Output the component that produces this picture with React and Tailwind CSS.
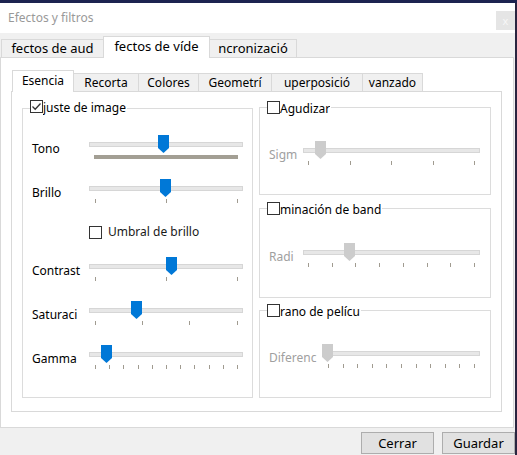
import React from "react";

// evenly spaced tick positions between a and b
const spread = (a, b, n) =>
  Array.from({ length: n }, (_, i) => a + ((b - a) * i) / (n - 1));

const Thumb = ({ disabled }) => (
  <svg width="11" height="18" viewBox="0 0 11 18" className="block">
    <path
      d="M0 0H11V13L5.5 18L0 13Z"
      fill={disabled ? "#cccccc" : "#0078d7"}
    />
  </svg>
);

const Slider = ({ className, pos, ticks = [], bar, disabled }) => (
  <div className={`relative h-[26px] shrink-0 ${className}`}>
    <div className="absolute left-0 right-0 top-[7px] h-[5px] bg-[#e7e7e7] border border-[#d6d6d6]" />
    {bar && (
      <div className="absolute left-[5px] right-[5px] top-[20px] h-[4px] bg-[#a39f94]" />
    )}
    {ticks.map((t, i) => (
      <div
        key={i}
        className="absolute top-[20px] h-[4px] w-px bg-[#a09b90]"
        style={{ left: Math.round(t) }}
      />
    ))}
    <div className="absolute top-0" style={{ left: pos }}>
      <Thumb disabled={disabled} />
    </div>
  </div>
);

const CheckBox = ({ checked }) => (
  <div className="w-[13px] h-[13px] border border-[#333333] bg-white shrink-0 flex items-center justify-center">
    {checked && (
      <svg width="11" height="11" viewBox="0 0 11 11">
        <path d="M1.5 5.5L4.2 8.2L9.5 2.5" fill="none" stroke="#333" strokeWidth="1.3" />
      </svg>
    )}
  </div>
);

const GroupTitle = ({ label, checked, top }) => (
  <div className={`absolute left-[7px] ${top} flex items-start bg-white pr-[1px]`}>
    <CheckBox checked={checked} />
    <div className="h-[15px] overflow-hidden whitespace-nowrap leading-[16px] text-black">
      {label}
    </div>
  </div>
);

const leftRows = [
  { label: "Tono", pos: 69, bar: true },
  { label: "Brillo", pos: 71, ticks: [6, 77, 148] },
  { umbral: true },
  { label: "Contrast", pos: 77, ticks: [6, 77, 148] },
  { label: "Saturaci", pos: 42, ticks: [6, 53, 100, 148] },
  { label: "Gamma", pos: 12, ticks: spread(6, 148, 11) },
];

const rightGroups = [
  { title: "Agudizar", label: "Sigm", labelW: "w-[34px]", sliderW: "w-[177px]", pos: 12, ticks: spread(5, 171, 5), h: "h-[88px]" },
  { title: "minación de band", label: "Radi", labelW: "w-[34px]", sliderW: "w-[177px]", pos: 41, ticks: spread(5, 171, 8), h: "h-[90px]", pt: "pt-[34px]" },
  { title: "rano de pelícu", label: "Diferenc", labelW: "w-[53px]", sliderW: "w-[158px]", pos: 0, ticks: spread(6, 152, 11), h: "h-[88px]" },
];

const OuterTab = ({ label, width, selected }) => (
  <div
    className={`${width} -ml-px first:ml-0 border border-b-0 border-[#d9d9d9] overflow-hidden whitespace-nowrap flex items-center justify-center text-[13px] ${
      selected ? "h-[22px] -mb-px bg-white relative z-10 pb-[2px]" : "h-[18px] bg-[#f0f0f0]"
    }`}
  >
    {label}
  </div>
);

export default function App() {
  return (
    <div className="w-[517px] h-[455px] flex flex-col bg-[#1d2350] overflow-hidden font-['Noto_Sans',sans-serif] text-[12px] text-black">
      <div className="h-[3px] shrink-0" />
      <div className="flex flex-1 min-h-0">
        <div className="w-[515px] flex flex-col bg-[#f0f0f0]">
          {/* title bar */}
          <div className="h-[30px] bg-white flex justify-between shrink-0">
            <span className="pl-2 pt-[6px] text-[#999999]">Efectos y filtros</span>
            <div className="w-[19px] h-[19px] mt-[8px] bg-[#e5e5e5] flex items-center justify-center text-[11px] leading-none text-[#f7f7f7]">
              x
            </div>
          </div>

          {/* outer tabs */}
          <div className="h-[21px] mt-[3px] flex items-end pl-[1px] shrink-0">
            <OuterTab label="fectos de aud" width="w-[103px]" />
            <OuterTab label="fectos de víde" width="w-[107px]" selected />
            <OuterTab label="ncronizació" width="w-[88px]" />
          </div>

          {/* outer panel */}
          <div className="w-[514px] h-[371px] bg-white border border-[#d9d9d9] pt-[12px] shrink-0">
            {/* inner tabs */}
            <div className="h-[21px] flex items-end pl-[11px]">
              <OuterTab label="Esencia" width="w-[62px] !text-[12px]" selected />
              <OuterTab label="Recorta" width="w-[66px] !text-[12px]" />
              <OuterTab label="Colores" width="w-[61px] !text-[12px]" />
              <OuterTab label="Geometrí" width="w-[74px] !text-[12px]" />
              <OuterTab label="uperposició" width="w-[92px] !text-[12px]" />
              <OuterTab label="vanzado" width="w-[61px] !text-[12px]" />
            </div>

            {/* inner panel */}
            <div className="ml-[10px] w-[491px] h-[321px] border border-[#d9d9d9] flex pl-[10px] gap-[6px]">
              {/* left group */}
              <div className="relative mt-[16px] w-[231px] h-[290px] border border-[#dcdcdc] pl-[9px] pt-[26px]">
                <GroupTitle label="juste de image" checked top="-top-[9px]" />
                {leftRows.map((r, i) =>
                  r.umbral ? (
                    <div key={i} className="h-[34px] flex items-start pl-[57px] pt-[3px]">
                      <CheckBox />
                      <span className="ml-[6px] -mt-[2px] leading-[16px] text-[#1a1a1a]">Umbral de brillo</span>
                    </div>
                  ) : (
                    <div key={i} className="h-[44px] flex items-start">
                      <div className="w-[51px] mr-[6px] pt-[6px] leading-[16px] whitespace-nowrap">
                        {r.label}
                      </div>
                      <Slider className="w-[154px]" pos={r.pos} ticks={r.ticks} bar={r.bar} />
                    </div>
                  )
                )}
              </div>

              {/* right column */}
              <div className="flex flex-col pt-[15px]">
                {rightGroups.map((g, i) => (
                  <div
                    key={i}
                    className={`relative w-[232px] ${g.h} border border-[#dcdcdc] pl-[9px] ${g.pt || "pt-[33px]"} ${
                      i === 1 ? "mt-[13px]" : i === 2 ? "mt-[12px]" : ""
                    }`}
                  >
                    <GroupTitle label={g.title} top="-top-[7px]" />
                    <div className="flex items-start">
                      <div className={`${g.labelW} pt-[6px] leading-[16px] whitespace-nowrap text-[#a0a0a0]`}>
                        {g.label}
                      </div>
                      <Slider className={g.sliderW} pos={g.pos} ticks={g.ticks} disabled />
                    </div>
                  </div>
                ))}
              </div>
            </div>
          </div>

          {/* buttons */}
          <div className="flex justify-end gap-[8px] pt-[4px]">
            <button className="w-[73px] h-[22px] border border-[#adadad] bg-[#e1e1e1] text-[13px] leading-none">
              Cerrar
            </button>
            <button className="w-[73px] h-[22px] border border-[#adadad] bg-[#e1e1e1] text-[13px] leading-none">
              Guardar
            </button>
          </div>
        </div>
        <div className="flex-1 bg-[#2a2540]" />
      </div>
    </div>
  );
}
